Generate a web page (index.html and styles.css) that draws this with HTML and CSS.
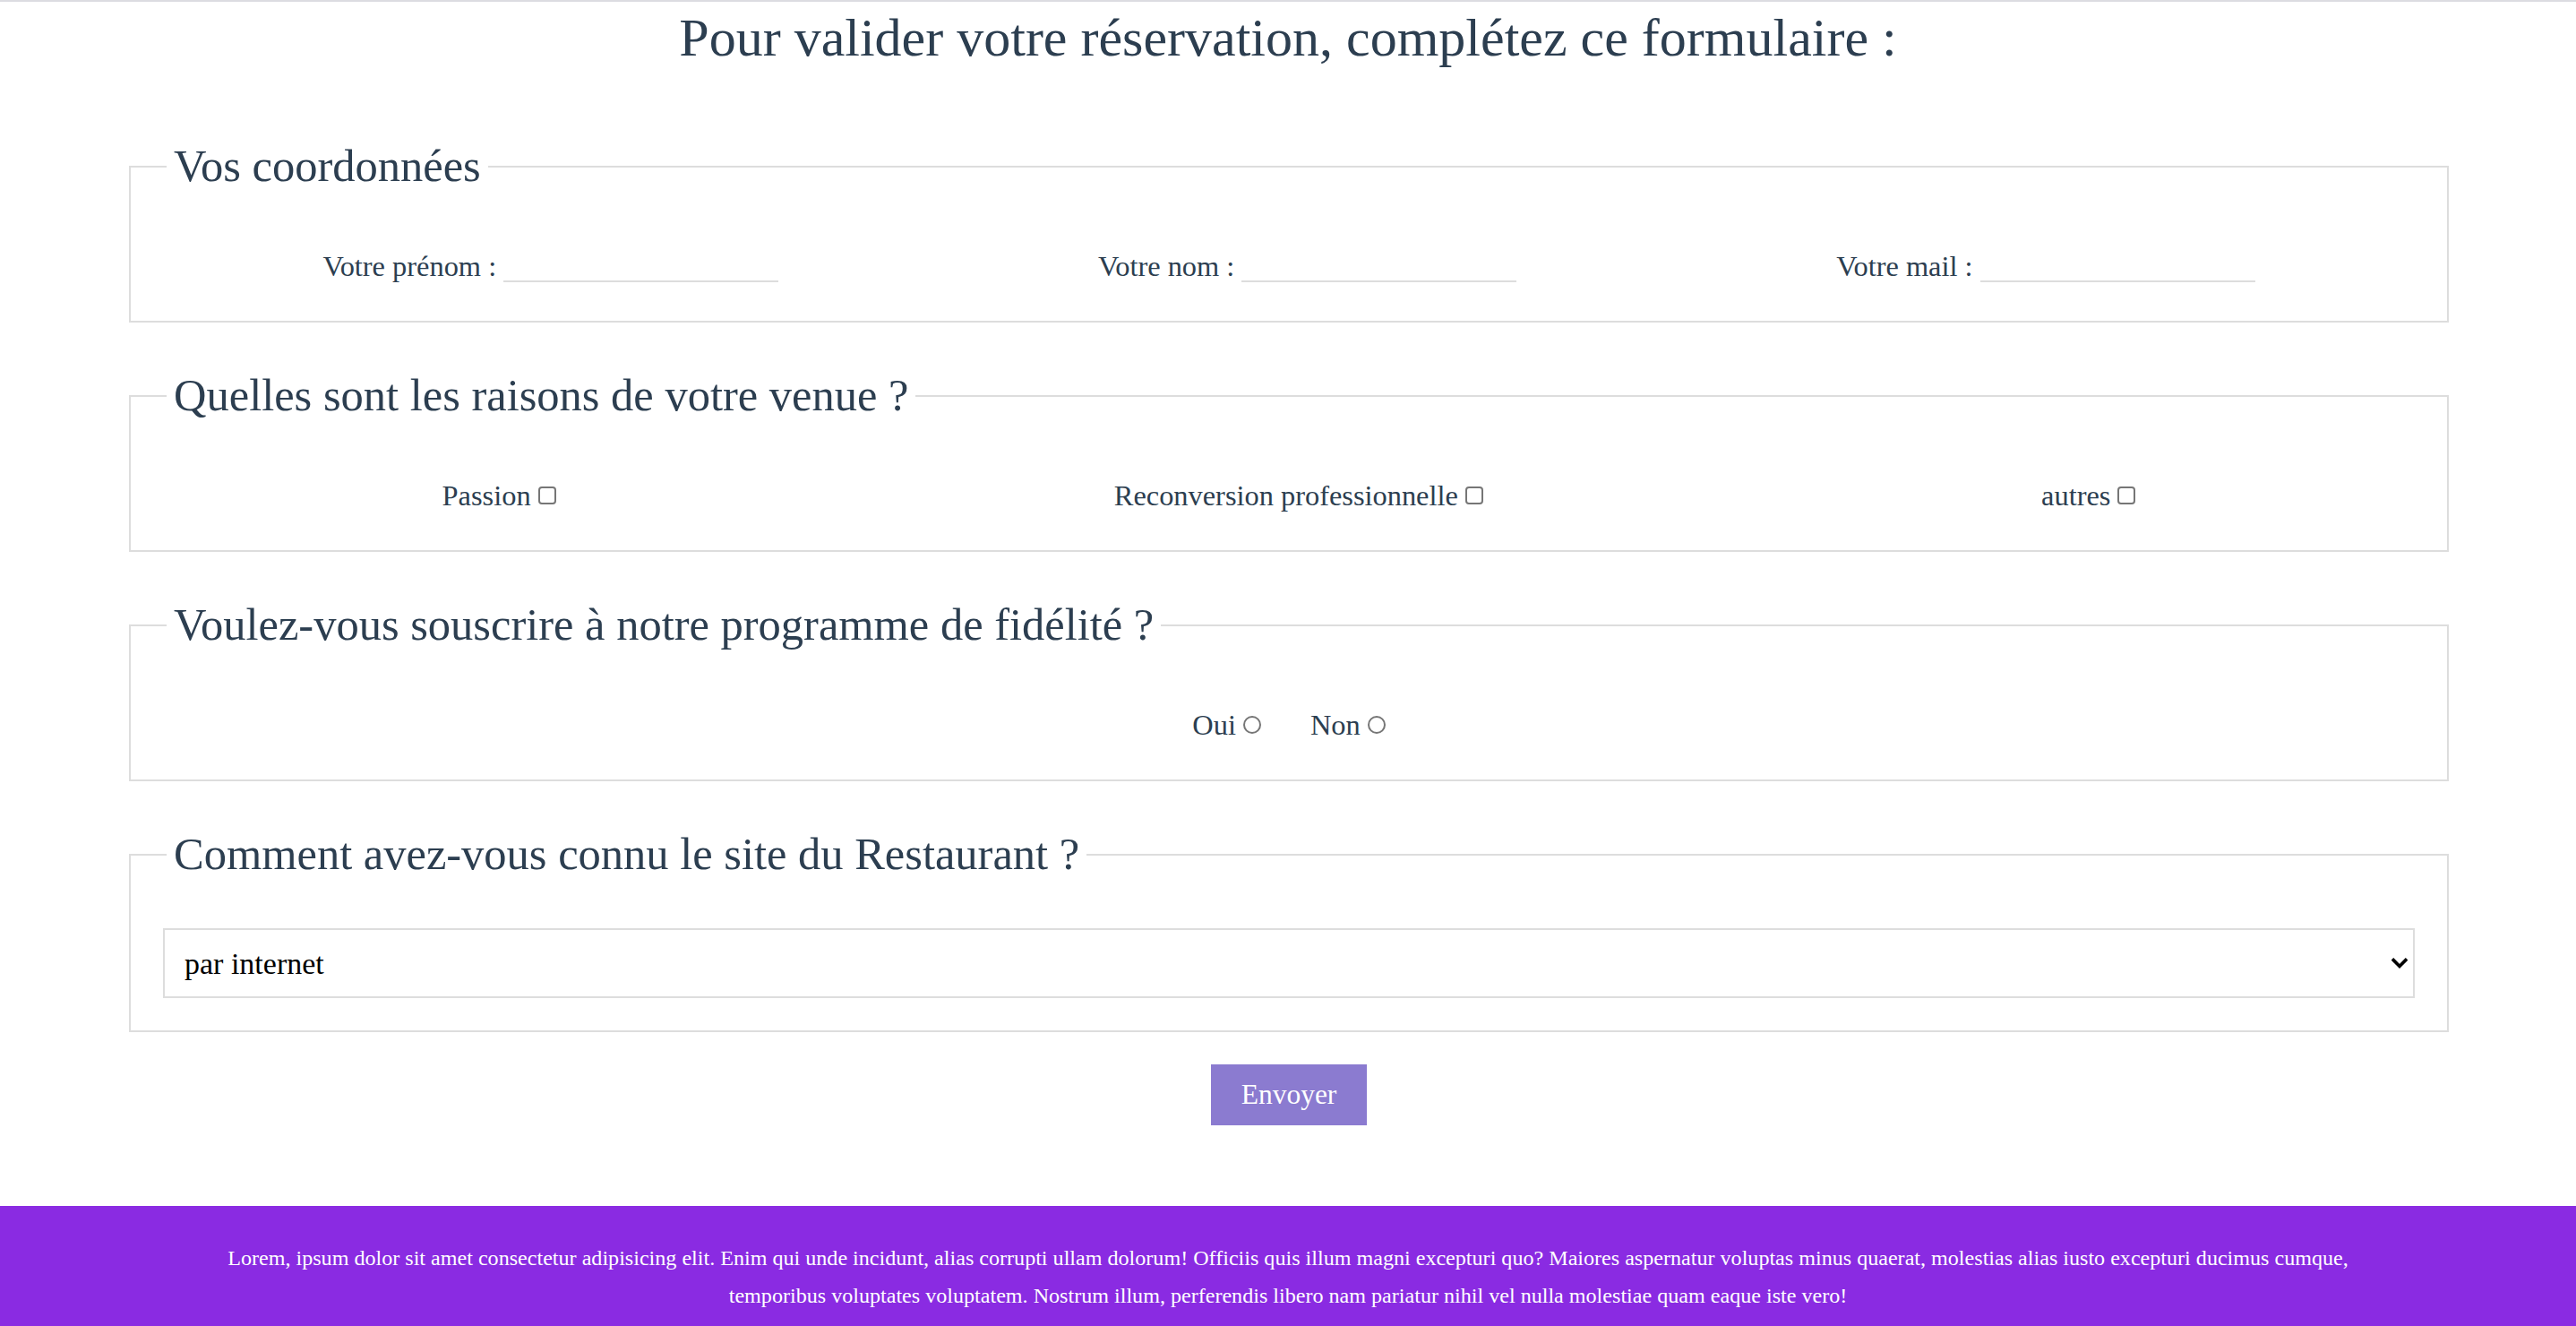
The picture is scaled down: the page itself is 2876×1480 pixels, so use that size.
FILE: index.html
```html
<!DOCTYPE html>
<html lang="fr">
<head>
<meta charset="utf-8">
<title>Réservation</title>
<link rel="stylesheet" href="styles.css">
</head>
<body>
<div class="topline"></div>
<main class="page">
  <h1 class="title">Pour valider votre réservation, complétez ce formulaire :</h1>
  <form class="form">
    <fieldset class="box">
      <legend class="box-title">Vos coordonnées</legend>
      <div class="row row-around">
        <label class="field"><span>Votre prénom :</span><input class="line-input" type="text"></label>
        <label class="field"><span>Votre nom :</span><input class="line-input" type="text"></label>
        <label class="field"><span>Votre mail :</span><input class="line-input" type="email"></label>
      </div>
    </fieldset>

    <fieldset class="box">
      <legend class="box-title">Quelles sont les raisons de votre venue ?</legend>
      <div class="row row-around">
        <label class="field"><span>Passion</span><input class="tick tick-box" type="checkbox"></label>
        <label class="field"><span>Reconversion professionnelle</span><input class="tick tick-box" type="checkbox"></label>
        <label class="field"><span>autres</span><input class="tick tick-box" type="checkbox"></label>
      </div>
    </fieldset>

    <fieldset class="box">
      <legend class="box-title">Voulez-vous souscrire à notre programme de fidélité ?</legend>
      <div class="row row-center">
        <label class="field"><span>Oui</span><input class="tick tick-round" type="radio" name="fidelite"></label>
        <label class="field"><span>Non</span><input class="tick tick-round" type="radio" name="fidelite"></label>
      </div>
    </fieldset>

    <fieldset class="box box-last">
      <legend class="box-title">Comment avez-vous connu le site du Restaurant ?</legend>
      <div class="choice">
        <select class="select">
          <option>par internet</option>
          <option>par un ami</option>
          <option>par la presse</option>
        </select>
        <svg class="chevron" viewBox="0 0 18 13" aria-hidden="true">
          <polyline points="2.2,2.6 9,9.4 15.8,2.6" fill="none" stroke="#000" stroke-width="3.6" stroke-linecap="square" stroke-linejoin="miter"/>
        </svg>
      </div>
    </fieldset>

    <div class="actions">
      <button class="send" type="button">Envoyer</button>
    </div>
  </form>
</main>
<footer class="footer">
  <p>Lorem, ipsum dolor sit amet consectetur adipisicing elit. Enim qui unde incidunt, alias corrupti ullam dolorum! Officiis quis illum magni excepturi quo? Maiores aspernatur voluptas minus quaerat, molestias alias iusto excepturi ducimus cumque,<br>temporibus voluptates voluptatem. Nostrum illum, perferendis libero nam pariatur nihil vel nulla molestiae quam eaque iste vero!</p>
</footer>
</body>
</html>
```

FILE: styles.css
```css
* {
  box-sizing: border-box;
}

html,
body {
  margin: 0;
}

body {
  font-family: "Liberation Serif", "Times New Roman", serif;
  color: #2c3e50;
  background: #ffffff;
}

.topline {
  height: 2px;
  background: #dcdce1;
}

.title {
  margin: 6px 0 0;
  font-size: 60px;
  line-height: 69px;
  font-weight: 400;
  text-align: center;
}

.form {
  padding: 80px 142px 90px 144px;
}

.box {
  margin: 0 0 53px;
  border: 2px solid #dddddd;
  padding: 54px 36px 36px;
  min-width: 0;
}

.box-last {
  margin-bottom: 0;
}

.box-title {
  font-size: 50.5px;
  line-height: 57px;
  padding: 0 8px;
  margin-left: 4px;
}

.row {
  display: flex;
  align-items: flex-end;
  padding: 11px 0 7px;
}

.row-around {
  justify-content: space-around;
}

.row-center {
  justify-content: center;
  gap: 55px;
}

.field {
  display: flex;
  align-items: flex-end;
  gap: 8px;
  font-size: 32.4px;
  line-height: 36px;
}

.line-input {
  width: 307px;
  height: 24px;
  padding: 0;
  border: 0;
  border-bottom: 2px solid #dddddd;
  background: transparent;
  outline: none;
  font-family: inherit;
  font-size: 16px;
}

.tick {
  -webkit-appearance: none;
  appearance: none;
  width: 20px;
  height: 20px;
  margin: 0 0 8px;
  border: 2px solid #767676;
  background: #ffffff;
}

.tick-box {
  border-radius: 4px;
}

.tick-round {
  border-radius: 50%;
}

.choice {
  position: relative;
}

.select {
  display: block;
  width: 100%;
  height: 78px;
  margin: 0;
  padding: 0 60px 0 22px;
  -webkit-appearance: none;
  appearance: none;
  border: 2px solid #dddddd;
  border-radius: 0;
  background: #ffffff;
  color: #000000;
  font-family: inherit;
  font-size: 34px;
}

.chevron {
  position: absolute;
  right: 8px;
  top: 33px;
  width: 18px;
  height: 13px;
  pointer-events: none;
}

.actions {
  display: flex;
  justify-content: center;
  margin-top: 36px;
}

.send {
  padding: 16px 34px;
  border: 0;
  background: #8b7bd0;
  color: #ffffff;
  font-family: inherit;
  font-size: 31.5px;
  line-height: 36px;
}

.footer {
  background: #8a2be2;
  color: #ffffff;
  padding: 37px 40px;
  text-align: center;
}

.footer p {
  margin: 0;
  font-size: 24.1px;
  line-height: 42px;
}
```
